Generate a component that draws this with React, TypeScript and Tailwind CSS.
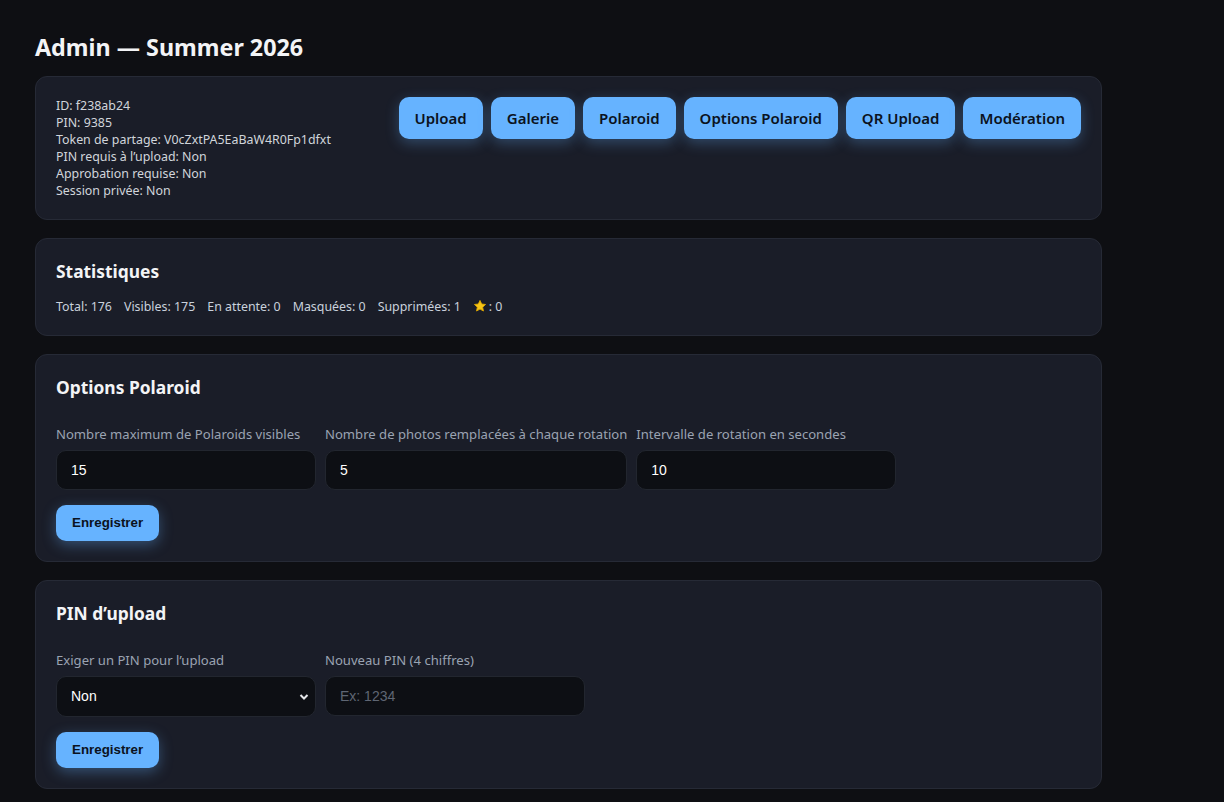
import React from 'react';

const navButtons = ['Upload', 'Galerie', 'Polaroid', 'Options Polaroid', 'QR Upload', 'Modération'];

const info = [
  'ID: f238ab24',
  'PIN: 9385',
  'Token de partage: V0cZxtPA5EaBaW4R0Fp1dfxt',
  'PIN requis à l’upload: Non',
  'Approbation requise: Non',
  'Session privée: Non',
];

const stats = ['Total: 176', 'Visibles: 175', 'En attente: 0', 'Masquées: 0', 'Supprimées: 1'];

function Card({ children }: { children: React.ReactNode }) {
  return (
    <div className="mb-[18px] rounded-[12px] border border-[#262a36] bg-[#1a1d28] p-5">
      {children}
    </div>
  );
}

function CardTitle({ children }: { children: React.ReactNode }) {
  return <h2 className="text-[17.4px] font-bold leading-[25px] text-[#f3f4f6]">{children}</h2>;
}

function Field({ label, children }: { label: string; children: React.ReactNode }) {
  return (
    <div className="flex min-w-[260px] flex-col gap-[6px]">
      <label className="text-[13.1px] leading-[20px] text-[#9aa3b2]">{label}</label>
      {children}
    </div>
  );
}

function TextInput({ value, placeholder }: { value?: string; placeholder?: string }) {
  return (
    <input
      defaultValue={value}
      placeholder={placeholder}
      className="h-[40px] w-full rounded-[10px] border border-[#22262f] bg-[#0d0f14] px-[14px] font-['Liberation_Sans',Arial,sans-serif] text-[14px] text-white outline-none placeholder:text-[#5f6673]"
    />
  );
}

function SaveButton() {
  return (
    <button className="mt-[15px] h-[36px] rounded-[10px] bg-[#66b3ff] px-4 font-['Liberation_Sans',Arial,sans-serif] text-[13.33px] font-bold text-[#0b1220] shadow-[0_4px_14px_rgba(102,179,255,0.35)]">
      Enregistrer
    </button>
  );
}

function Star() {
  return (
    <svg width="14" height="14" viewBox="0 0 24 24" className="mr-[2px] inline-block align-[-2px]">
      <path
        d="M12 2.5l2.9 6.1 6.6.8-4.9 4.6 1.3 6.6L12 17.3l-5.9 3.3 1.3-6.6-4.9-4.6 6.6-.8z"
        fill="#f5c518"
        stroke="#e0a800"
        strokeWidth="1.5"
        strokeLinejoin="round"
      />
    </svg>
  );
}

export default function App() {
  return (
    <div className="min-h-screen bg-[#0e0f13] font-['Segoe_UI','Noto_Sans',sans-serif] text-[#e5e7eb]">
      <div className="ml-[35px] w-[1067px] pt-[32px]">
        {/* Header */}
        <h1 className="mb-[14px] text-[23.3px] font-bold leading-[30px] text-[#f3f4f6]">Admin — Summer 2026</h1>

        {/* Session info + navigation */}
        <Card>
          <div className="flex items-start justify-between">
            <div className="text-[12.4px] leading-[17px] text-[#d1d5db]">
              {info.map((line) => (
                <div key={line}>{line}</div>
              ))}
            </div>
            <div className="flex flex-wrap gap-2">
              {navButtons.map((b) => (
                <button
                  key={b}
                  className="h-[42px] rounded-[10px] bg-[#66b3ff] px-4 text-[15px] font-semibold text-[#0b1220] shadow-[0_4px_14px_rgba(102,179,255,0.3)]"
                >
                  {b}
                </button>
              ))}
            </div>
          </div>
        </Card>

        {/* Stats */}
        <Card>
          <CardTitle>Statistiques</CardTitle>
          <div className="mt-[14px] flex gap-3 text-[12.4px] leading-[17px] text-[#c9d1dc]">
            {stats.map((s) => (
              <span key={s}>{s}</span>
            ))}
            <span>
              <Star />: 0
            </span>
          </div>
        </Card>

        {/* Polaroid options */}
        <Card>
          <CardTitle>Options Polaroid</CardTitle>
          <div className="mt-[24px] flex flex-wrap gap-[9px]">
            <Field label="Nombre maximum de Polaroids visibles">
              <TextInput value="15" />
            </Field>
            <Field label="Nombre de photos remplacées à chaque rotation">
              <TextInput value="5" />
            </Field>
            <Field label="Intervalle de rotation en secondes">
              <TextInput value="10" />
            </Field>
          </div>
          <SaveButton />
        </Card>

        {/* Upload PIN */}
        <Card>
          <CardTitle>PIN d’upload</CardTitle>
          <div className="mt-[24px] flex flex-wrap gap-[9px]">
            <Field label="Exiger un PIN pour l’upload">
              <div className="relative">
                <select className="h-[41px] w-full appearance-none rounded-[10px] border border-[#22262f] bg-[#0d0f14] px-[14px] font-['Liberation_Sans',Arial,sans-serif] text-[14px] text-white outline-none">
                  <option>Non</option>
                  <option>Oui</option>
                </select>
                <svg
                  width="10"
                  height="10"
                  viewBox="0 0 10 10"
                  className="pointer-events-none absolute right-[7px] top-[16px]"
                >
                  <path d="M1.5 3l3.5 3.5L8.5 3" fill="none" stroke="#e5e7eb" strokeWidth="2" />
                </svg>
              </div>
            </Field>
            <Field label="Nouveau PIN (4 chiffres)">
              <TextInput placeholder="Ex: 1234" />
            </Field>
          </div>
          <SaveButton />
        </Card>
      </div>
    </div>
  );
}
